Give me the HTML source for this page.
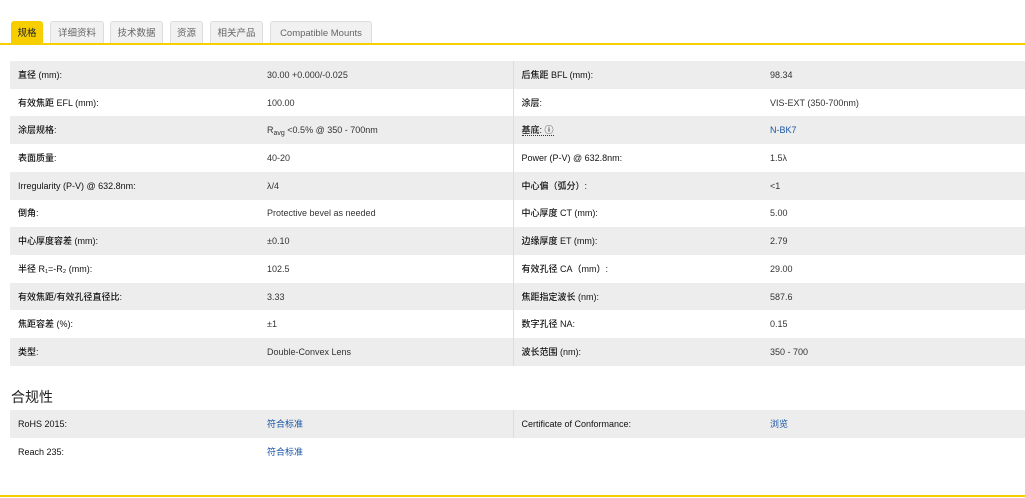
<!DOCTYPE html>
<html><head><meta charset="utf-8"><style>
*{margin:0;padding:0;box-sizing:border-box}
body{width:1025px;height:498px;background:#fff;font-family:"Liberation Sans","Noto Sans CJK SC",sans-serif;font-size:9px;color:#333;position:relative;overflow:hidden}
.tab{position:absolute;top:21px;height:23px;background:#f1f1f1;border:1px solid #ddd;border-bottom:none;border-radius:3px 3px 0 0;color:#666;font-size:9.5px;line-height:23px;text-align:center}
.tab.on{background:#f7cf00;border-color:#f7cf00;color:#222}
.line{position:absolute;left:0;width:1025px;height:2px;background:#f7cf00}
table{position:absolute;left:10px;width:1015px;border-collapse:collapse}
td{height:27.73px;line-height:12px;padding:0 0 0 8px;vertical-align:middle;white-space:nowrap}
tr.g td{background:#ededed}
td.l{width:249px;color:#111;font-weight:500}
td.v{width:254px}
td.sep{border-left:1px solid #ddd}
sub{font-size:7px;line-height:0;vertical-align:-2px}
a{color:#1a56a6;text-decoration:none}
h3{position:absolute;left:11px;top:387px;font-size:14px;font-weight:normal;color:#222}
</style></head><body>
<div class="tab on" style="left:11px;width:32px">规格</div>
<div class="tab" style="left:50px;width:54px">详细资料</div>
<div class="tab" style="left:110px;width:53px">技术数据</div>
<div class="tab" style="left:170px;width:33px">资源</div>
<div class="tab" style="left:210px;width:53px">相关产品</div>
<div class="tab" style="left:270px;width:102px">Compatible Mounts</div>
<div class="line" style="top:43px"></div>
<table style="top:61px">
<tr class="g"><td class="l">直径 (mm):</td><td class="v">30.00 +0.000/-0.025</td><td class="l sep">后焦距 BFL (mm):</td><td>98.34</td></tr>
<tr><td class="l">有效焦距 EFL (mm):</td><td class="v">100.00</td><td class="l sep">涂层:</td><td>VIS-EXT (350-700nm)</td></tr>
<tr class="g"><td class="l">涂层规格:</td><td class="v">R<sub>avg</sub> &lt;0.5% @ 350 - 700nm</td><td class="l sep"><span style="border-bottom:1px dotted #333">基底: ⓘ</span></td><td><a>N-BK7</a></td></tr>
<tr><td class="l">表面质量:</td><td class="v">40-20</td><td class="l sep">Power (P-V) @ 632.8nm:</td><td>1.5λ</td></tr>
<tr class="g"><td class="l">Irregularity (P-V) @ 632.8nm:</td><td class="v">λ/4</td><td class="l sep">中心偏（弧分）:</td><td>&lt;1</td></tr>
<tr><td class="l">倒角:</td><td class="v">Protective bevel as needed</td><td class="l sep">中心厚度 CT (mm):</td><td>5.00</td></tr>
<tr class="g"><td class="l">中心厚度容差 (mm):</td><td class="v">±0.10</td><td class="l sep">边缘厚度 ET (mm):</td><td>2.79</td></tr>
<tr><td class="l">半径 R₁=-R₂ (mm):</td><td class="v">102.5</td><td class="l sep">有效孔径 CA（mm）:</td><td>29.00</td></tr>
<tr class="g"><td class="l">有效焦距/有效孔径直径比:</td><td class="v">3.33</td><td class="l sep">焦距指定波长 (nm):</td><td>587.6</td></tr>
<tr><td class="l">焦距容差 (%):</td><td class="v">±1</td><td class="l sep">数字孔径 NA:</td><td>0.15</td></tr>
<tr class="g"><td class="l">类型:</td><td class="v">Double-Convex Lens</td><td class="l sep">波长范围 (nm):</td><td>350 - 700</td></tr>
</table>
<h3>合规性</h3>
<table style="top:410px">
<tr class="g"><td class="l">RoHS 2015:</td><td class="v"><a>符合标准</a></td><td class="l sep">Certificate of Conformance:</td><td><a>浏览</a></td></tr>
<tr><td class="l">Reach 235:</td><td class="v"><a>符合标准</a></td><td class="l"></td><td></td></tr>
</table>
<div class="line" style="top:495px"></div>
</body></html>
